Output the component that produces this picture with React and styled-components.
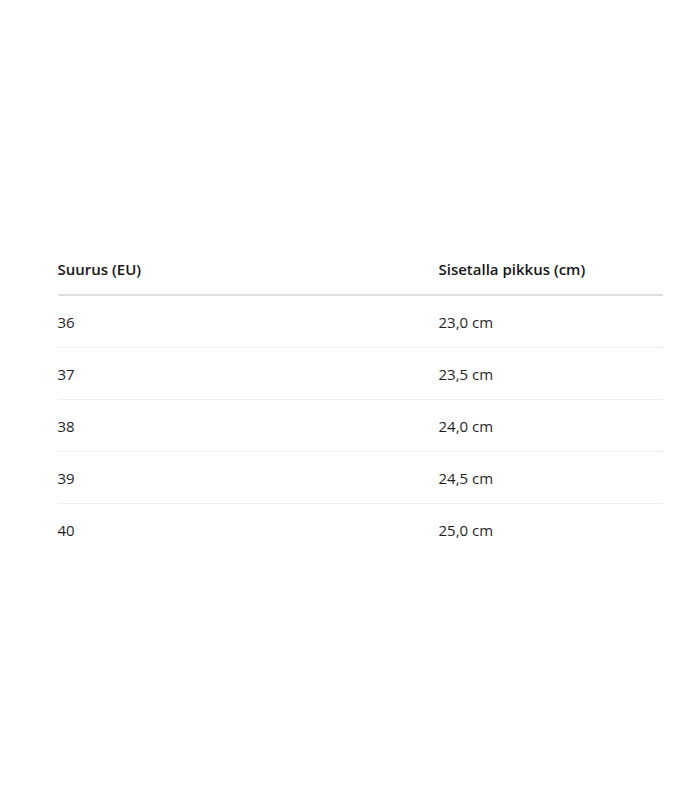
import React from "react";
import styled, { createGlobalStyle } from "styled-components";

const GlobalStyle = createGlobalStyle`
  html, body {
    margin: 0;
    padding: 0;
    background: #fff;
  }
  body {
    font-family: "Open Sans", "Noto Sans", sans-serif;
    color: #1c1c1c;
  }
`;

const Page = styled.div`
  width: 700px;
  height: 800px;
  display: flex;
  align-items: flex-start;
  justify-content: center;
  padding-top: 244px;
  box-sizing: border-box;
`;

const Table = styled.div`
  width: 605px;
  margin-left: 20px;
  display: grid;
  grid-template-columns: 381px 1fr;
`;

const Cell = styled.div`
  height: 52px;
  display: flex;
  align-items: center;
  box-sizing: border-box;
  font-size: 15px;
  font-weight: ${(p) => (p.head ? 600 : 400)};
  color: ${(p) => (p.head ? "#161616" : "#1f1f1f")};
  border-bottom: ${(p) =>
    p.head ? "2px solid #dcdcdc" : p.last ? "none" : "1px solid #eeeeee"};
`;

const rows = [
  ["36", "23,0 cm"],
  ["37", "23,5 cm"],
  ["38", "24,0 cm"],
  ["39", "24,5 cm"],
  ["40", "25,0 cm"],
];

export default function App() {
  return (
    <>
      <GlobalStyle />
      <Page>
        <Table>
          <Cell head>Suurus (EU)</Cell>
          <Cell head>Sisetalla pikkus (cm)</Cell>
          {rows.map(([size, length], i) => (
            <React.Fragment key={size}>
              <Cell last={i === rows.length - 1}>{size}</Cell>
              <Cell last={i === rows.length - 1}>{length}</Cell>
            </React.Fragment>
          ))}
        </Table>
      </Page>
    </>
  );
}
